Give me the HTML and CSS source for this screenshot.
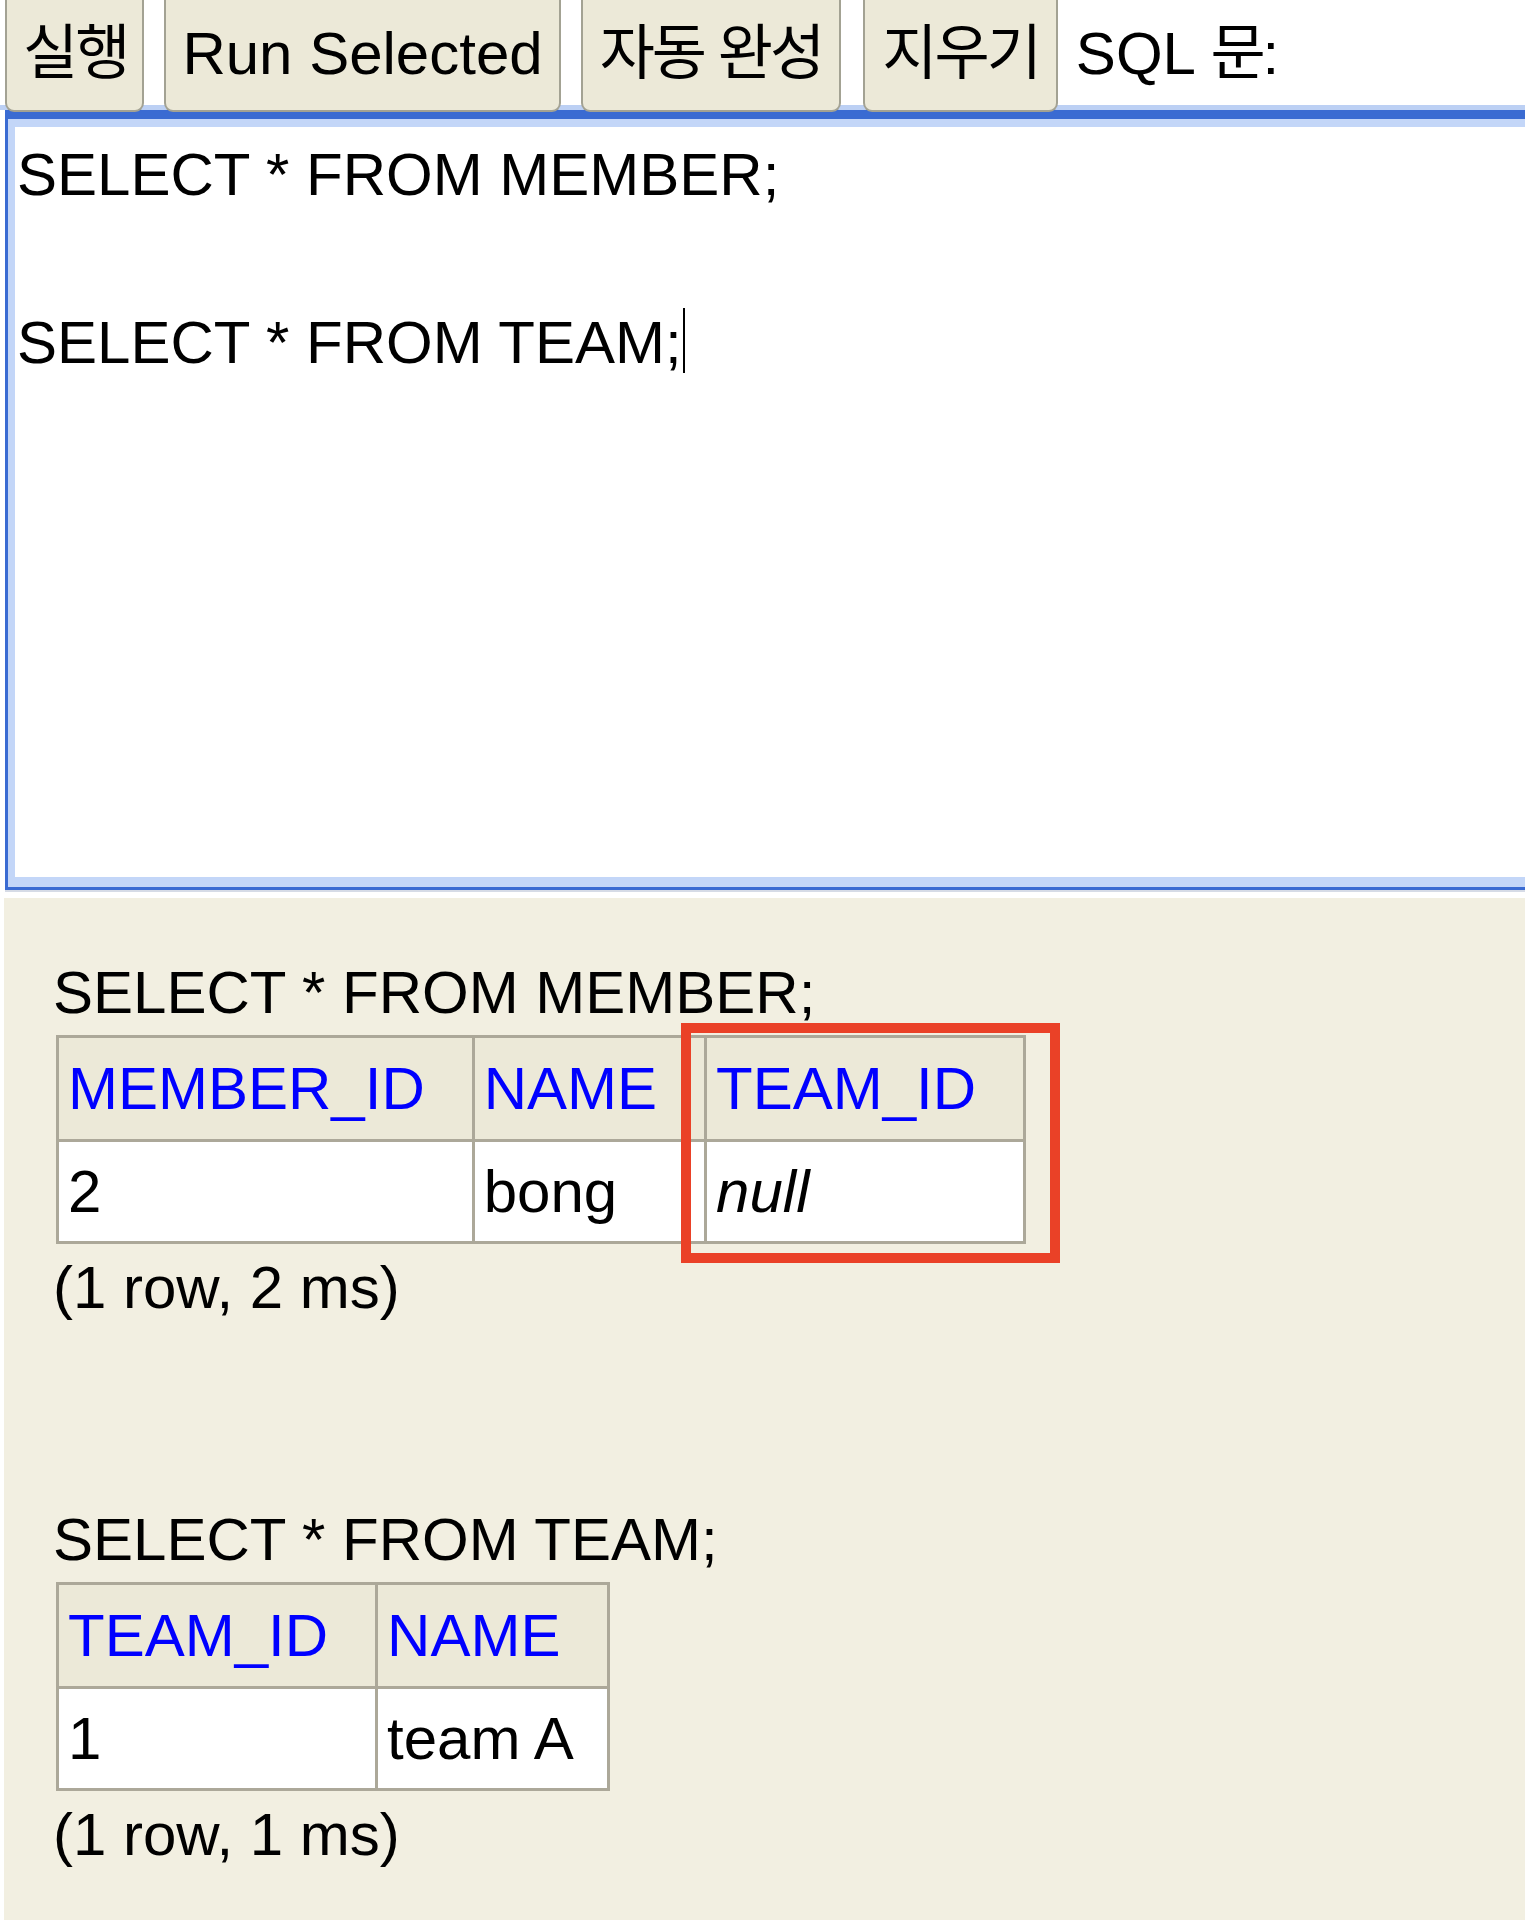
FILE: index.html
```html
<!DOCTYPE html>
<html lang="ko">
<head>
<meta charset="utf-8">
<title>H2 Console</title>
<link rel="stylesheet" href="styles.css">
</head>
<body>
<div class="toolbar">
  <span class="btn btn-run"><span class="ko">실행</span></span>
  <span class="btn btn-sel">Run Selected</span>
  <span class="btn"><span class="ko">자동 완성</span></span>
  <span class="btn btn-clear"><span class="ko">지우기</span></span>
  <span class="label">SQL <span class="ko">문</span>:</span>
</div>
<div class="editor">
  <div class="editor-inner"><div class="line">SELECT * FROM MEMBER;</div><div class="line">&nbsp;</div><div class="line">SELECT * FROM TEAM;<span class="caret"></span></div></div>
</div>
<div class="results">
  <div class="query">SELECT * FROM MEMBER;</div>
  <div class="table-wrap">
    <table class="result">
      <tr><th>MEMBER_ID</th><th>NAME</th><th>TEAM_ID</th></tr>
      <tr><td>2</td><td>bong</td><td><i>null</i></td></tr>
    </table>
    <div class="highlight"></div>
  </div>
  <div class="stats">(1 row, 2 ms)</div>

  <div class="query second">SELECT * FROM TEAM;</div>
  <div class="table-wrap">
    <table class="result">
      <tr><th>TEAM_ID</th><th>NAME</th></tr>
      <tr><td>1</td><td>team A</td></tr>
    </table>
  </div>
  <div class="stats">(1 row, 1 ms)</div>
</div>
</body>
</html>
```
FILE: styles.css
```css
html, body {
  margin: 0;
  padding: 0;
  background: #ffffff;
}
body {
  font-family: "Liberation Sans", Arial, "Noto Sans CJK KR", sans-serif;
  font-size: 60px;
  color: #000;
  overflow: hidden;
}
.ko {
  font-family: "Noto Sans CJK KR", sans-serif;
  letter-spacing: -3px;
  line-height: 50px;
}
.toolbar {
  display: flex;
  align-items: flex-start;
  gap: 20px;
  padding-left: 5px;
  height: 110px;
  background: linear-gradient(to bottom, #ffffff 0, #ffffff 105px, #bcd0f4 105px, #bcd0f4 110px);
}
.btn {
  box-sizing: border-box;
  height: 112px;
  padding: 20px 17px 0 17px;
  line-height: 67px;
  background: #ece9d8;
  border: 2px solid #a3a293;
  border-top: none;
  border-radius: 0 0 9px 9px;
  white-space: nowrap;
}
.btn-run {
  padding-left: 16px;
  padding-right: 15px;
}
.btn-sel {
  padding-left: 16px;
  padding-right: 16px;
}
.btn-clear {
  margin-left: 2px;
}
.label {
  padding-top: 20px;
  line-height: 67px;
  margin-left: -2px;
  white-space: nowrap;
}
.editor {
  margin-left: 5px;
  border-style: solid;
  border-color: #3a6bd2;
  border-width: 9px 0 3px 3px;
  background: #c3d6f8;
  padding: 8px 0 10px 7px;
  box-shadow: 0 2px 0 #d6dbe6;
}
.editor-inner {
  background: #ffffff;
  height: 744px;
  padding: 6px 0 0 2px;
  line-height: 84px;
  white-space: pre;
}
.caret {
  display: inline-block;
  width: 0;
  height: 65px;
  border-left: 2px solid #000;
  vertical-align: -10px;
  margin-left: 1px;
}
.results {
  margin-top: 8px;
  margin-left: 4px;
  background: #f2efe1;
  padding: 61px 0 80px 49px;
}
.query, .stats {
  line-height: 67px;
  white-space: nowrap;
}
.query.second {
  margin-top: 185px;
}
.table-wrap {
  position: relative;
  display: inline-block;
  margin-top: 9px;
  margin-left: 3px;
  vertical-align: top;
}
.stats {
  margin-top: 10px;
}
.result {
  border-collapse: separate;
  border-spacing: 0;
  border: 3px solid #aca899;
  font-size: 60px;
}
.result th, .result td {
  text-align: left;
  line-height: 67px;
  white-space: nowrap;
}
.result th {
  background: #ece9d8;
  color: #0000ff;
  font-weight: normal;
  padding: 17px 47px 17px 9px;
}
.result td {
  background: #ffffff;
  padding: 16px 7px 16px 9px;
  border-top: 3px solid #aca899;
}
.result th + th, .result td + td {
  border-left: 3px solid #aca899;
}
.result i {
  font-style: italic;
}
.highlight {
  position: absolute;
  left: 625px;
  top: -12px;
  width: 379px;
  height: 240px;
  box-sizing: border-box;
  border: 10px solid #ea4127;
  pointer-events: none;
}
```
